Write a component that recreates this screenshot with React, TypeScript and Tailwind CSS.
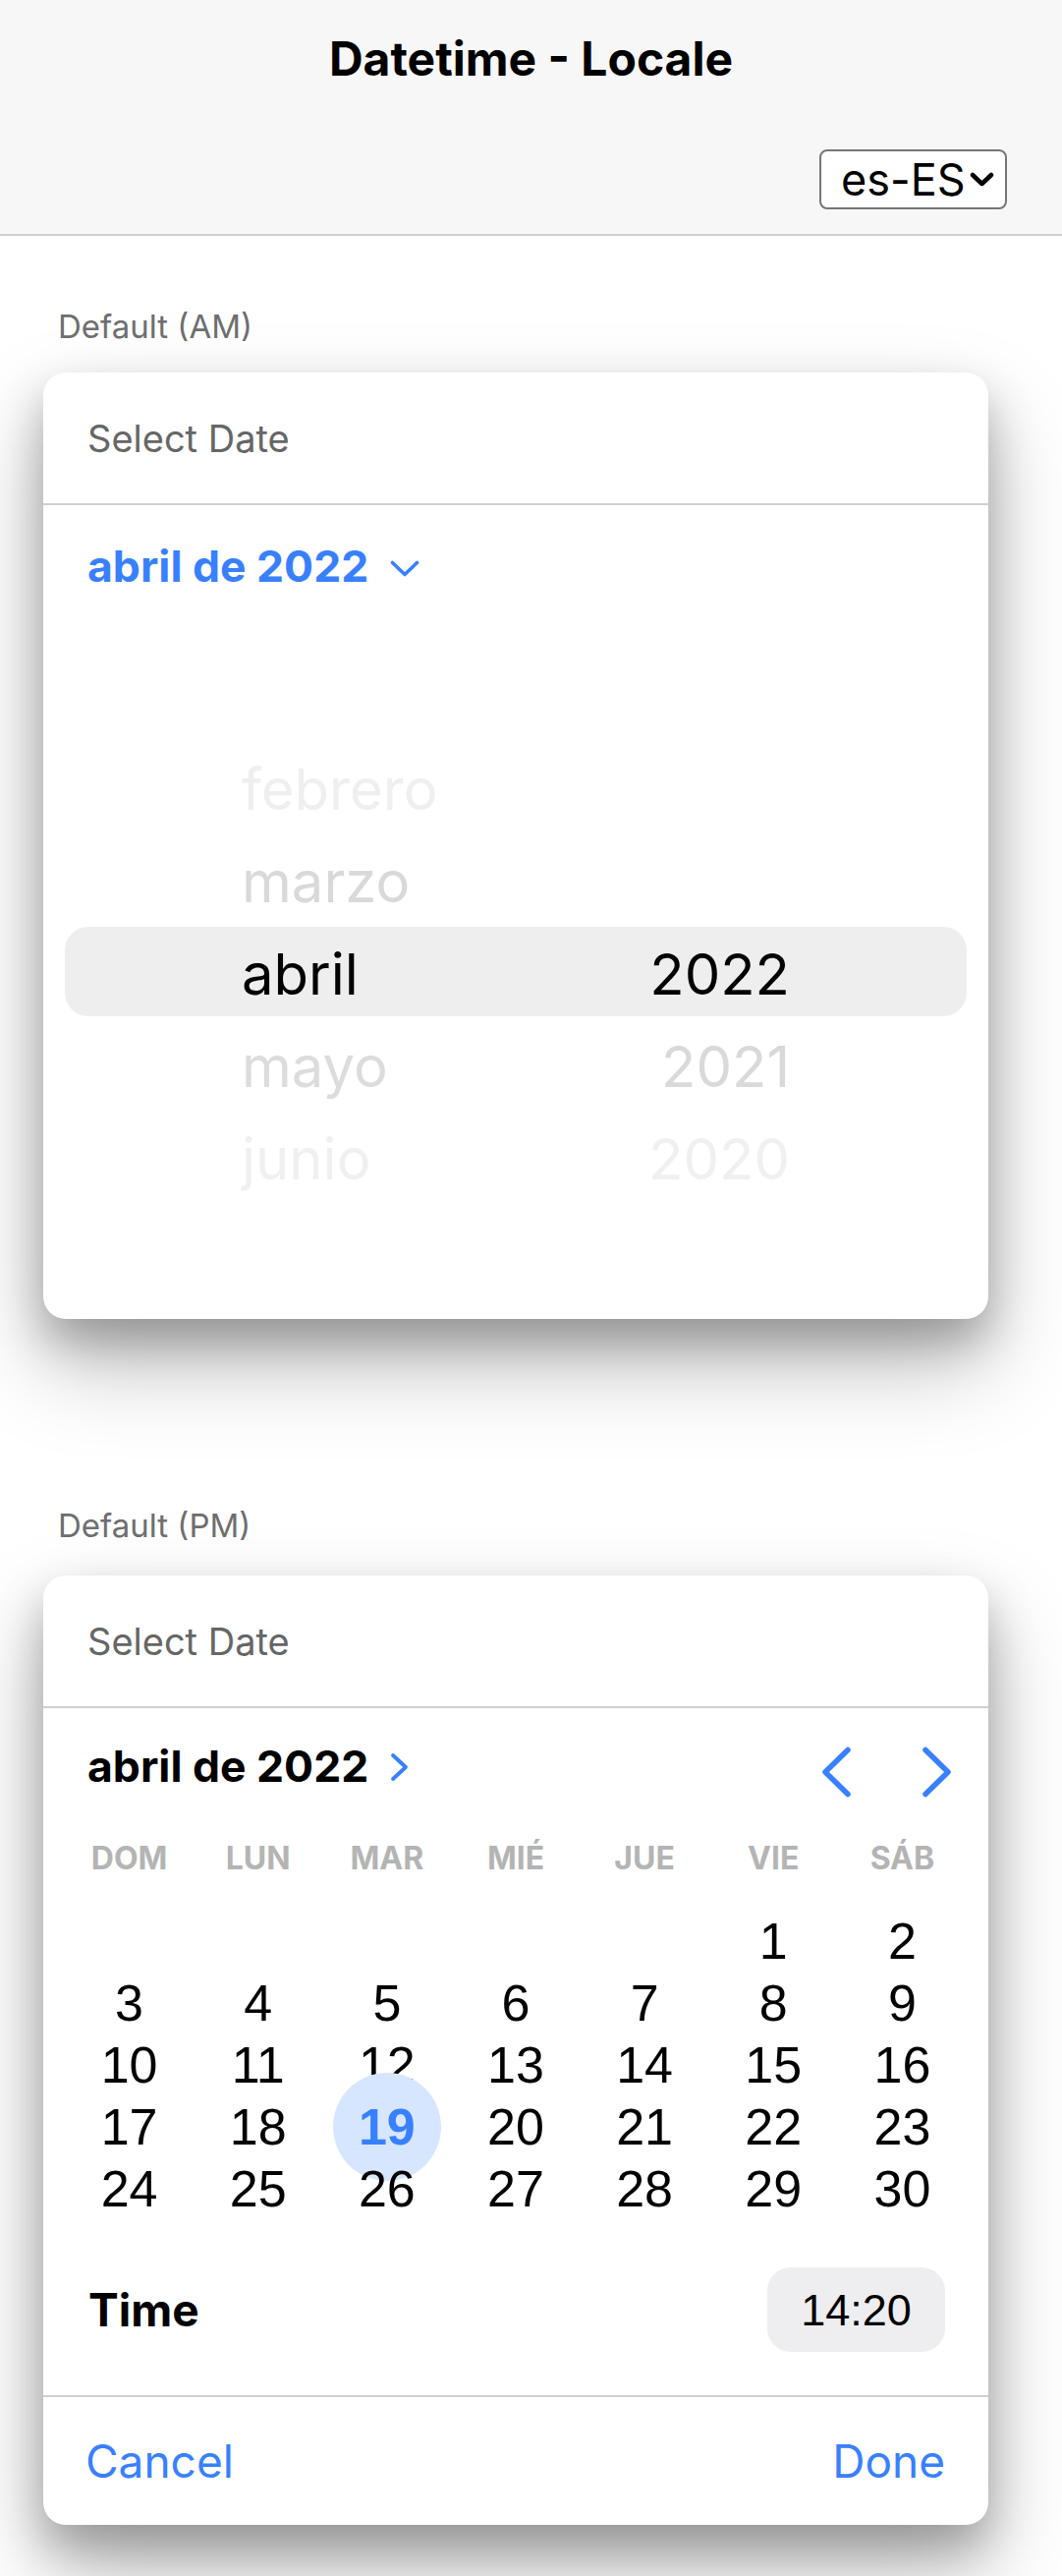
import React from "react";

const BLUE = "#3880ff";

function ChevronDown({ className }: { className?: string }) {
  return (
    <svg className={className} viewBox="0 0 30 17" fill="none">
      <path d="M2.5 2.5 L15 14.5 L27.5 2.5" stroke={BLUE} strokeWidth="3.6" strokeLinecap="round" strokeLinejoin="round" />
    </svg>
  );
}

function ChevronRightSmall({ className }: { className?: string }) {
  return (
    <svg className={className} viewBox="0 0 19 30" fill="none">
      <path d="M3 3 L16 15 L3 27" stroke={BLUE} strokeWidth="3.8" strokeLinecap="round" strokeLinejoin="round" />
    </svg>
  );
}

function NavChevron({ dir }: { dir: "left" | "right" }) {
  return (
    <svg className="w-[32px] h-[52px]" viewBox="0 0 32 52" fill="none">
      {dir === "left" ? (
        <path d="M28 3.5 L5 26 L28 48.5" stroke={BLUE} strokeWidth="5.5" strokeLinecap="round" strokeLinejoin="round" />
      ) : (
        <path d="M4 3.5 L27 26 L4 48.5" stroke={BLUE} strokeWidth="5.5" strokeLinecap="round" strokeLinejoin="round" />
      )}
    </svg>
  );
}

function CardHeader() {
  return (
    <div className="h-[133px] flex items-center px-[45px] border-b-2 border-[#d0d0d0] box-content">
      <span className="text-[38px] leading-none text-[#666666]">Select Date</span>
    </div>
  );
}

const months = [
  { t: "febrero", c: "text-[#efefef]" },
  { t: "marzo", c: "text-[#d9d9d9]" },
  { t: "abril", c: "text-black" },
  { t: "mayo", c: "text-[#dcdcdc]" },
  { t: "junio", c: "text-[#f0f0f0]" },
];
const years = [
  { t: "", c: "" },
  { t: "", c: "" },
  { t: "2022", c: "text-black" },
  { t: "2021", c: "text-[#d9d9d9]" },
  { t: "2020", c: "text-[#f0f0f0]" },
];

function WheelCard() {
  return (
    <div className="w-[962px] ml-[44px] mt-[30px] bg-white rounded-[23px] overflow-hidden shadow-[0_46px_92px_rgba(0,0,0,0.25),0_23px_46px_rgba(0,0,0,0.25)]">
      <CardHeader />
      <div className="h-[124px] flex items-center px-[45px] gap-[22px]">
        <span className="text-[44.5px] leading-none font-bold text-[#3880ff]">abril de 2022</span>
        <ChevronDown className="w-[30px] h-[17px] mt-[4px]" />
      </div>
      <div className="mt-[76px] mb-[79px] mx-[22px] h-[549px] relative overflow-hidden">
        <div className="absolute left-0 right-0 top-[229px] h-[91px] rounded-[24px] bg-[#eeeeee]" />
        <div className="relative flex justify-between px-[180px] pt-[42px]">
          <div className="flex flex-col">
            {months.map((m) => (
              <div key={m.t} className={`h-[94px] flex items-center text-[58px] leading-none ${m.c}`}>
                {m.t}
              </div>
            ))}
          </div>
          <div className="flex flex-col items-end">
            {years.map((y, i) => (
              <div key={i} className={`h-[94px] flex items-center text-[58px] leading-none ${y.c}`}>
                {y.t}
              </div>
            ))}
          </div>
        </div>
      </div>
    </div>
  );
}

const weekdays = ["DOM", "LUN", "MAR", "MIÉ", "JUE", "VIE", "SÁB"];

function CalendarCard() {
  const cells: (number | null)[] = [null, null, null, null, null];
  for (let d = 1; d <= 30; d++) cells.push(d);
  return (
    <div className="w-[962px] ml-[44px] mt-[34px] bg-white rounded-[23px] overflow-hidden shadow-[0_46px_92px_rgba(0,0,0,0.25),0_23px_46px_rgba(0,0,0,0.25)]">
      <CardHeader />
      <div className="h-[118px] flex items-center justify-between pl-[45px] pr-[36px]">
        <div className="flex items-center gap-[22px]">
          <span className="text-[44.5px] leading-none font-bold text-black">abril de 2022</span>
          <ChevronRightSmall className="w-[19px] h-[30px] mt-[2px]" />
        </div>
        <div className="flex items-center gap-[71px] mt-[12px]">
          <NavChevron dir="left" />
          <NavChevron dir="right" />
        </div>
      </div>
      <div className="h-[70px] grid grid-cols-7 px-[22px] items-center">
        {weekdays.map((w) => (
          <div key={w} className="text-center text-[32px] leading-none font-bold text-[#b4b4b4]">
            {w}
          </div>
        ))}
      </div>
      <div className="mt-[17px] grid grid-cols-7 px-[22px] font-['Liberation_Sans',Arial,sans-serif]">
        {cells.map((d, i) => (
          <div key={i} className="h-[63px] relative flex items-center justify-center">
            {d === 19 && (
              <div className="absolute left-1/2 top-1/2 -translate-x-1/2 -translate-y-1/2 w-[110px] h-[110px] rounded-full bg-[#d7e6ff]" />
            )}
            {d !== null && (
              <span
                className={`relative text-[52px] leading-none ${d === 19 ? "font-bold text-[#3880ff]" : "text-black"}`}
              >
                {d}
              </span>
            )}
          </div>
        ))}
      </div>
      <div className="mt-[49px] mb-[44px] h-[86px] flex items-center justify-between pl-[46px] pr-[44px]">
        <span className="text-[46px] leading-none font-bold text-black">Time</span>
        <div className="w-[181px] h-[86px] rounded-[24px] bg-[#eeeef0] flex items-center justify-center font-['Liberation_Sans',Arial,sans-serif] text-[45px] leading-none text-black">
          14:20
        </div>
      </div>
      <div className="border-t-2 border-[#d0d0d0] h-[132px] flex items-center justify-between pl-[43px] pr-[44px]">
        <span className="text-[46px] leading-none text-[#3880ff]">Cancel</span>
        <span className="text-[46px] leading-none text-[#3880ff]">Done</span>
      </div>
    </div>
  );
}

export default function App() {
  return (
    <div className="min-h-[2621px] bg-white font-['Inter',sans-serif]">
      <header className="bg-[#f7f7f7] border-b-2 border-[#d0d0d0]">
        <div className="h-[127px] flex items-center justify-center pb-[8px]">
          <h1 className="text-[48px] leading-none font-bold text-black">Datetime - Locale</h1>
        </div>
        <div className="flex justify-end pr-[56px] py-[25px]">
          <div className="w-[191px] h-[61px] border-2 border-[#767676] rounded-[8px] bg-white flex items-center justify-between pl-[20px] pr-[11px]">
            <span className="text-[45px] leading-none text-black">es-ES</span>
            <svg className="w-[25px] h-[16px]" viewBox="0 0 25 16" fill="none">
              <path d="M3 3 L12.5 12 L22 3" stroke="black" strokeWidth="4.5" strokeLinecap="round" strokeLinejoin="round" />
            </svg>
          </div>
        </div>
      </header>
      <main>
        <div className="ml-[59px] mt-[76px] text-[33px] leading-none text-[#6e6e6e]">Default (AM)</div>
        <WheelCard />
        <div className="ml-[59px] mt-[194px] text-[33px] leading-none text-[#6e6e6e]">Default (PM)</div>
        <CalendarCard />
      </main>
    </div>
  );
}
